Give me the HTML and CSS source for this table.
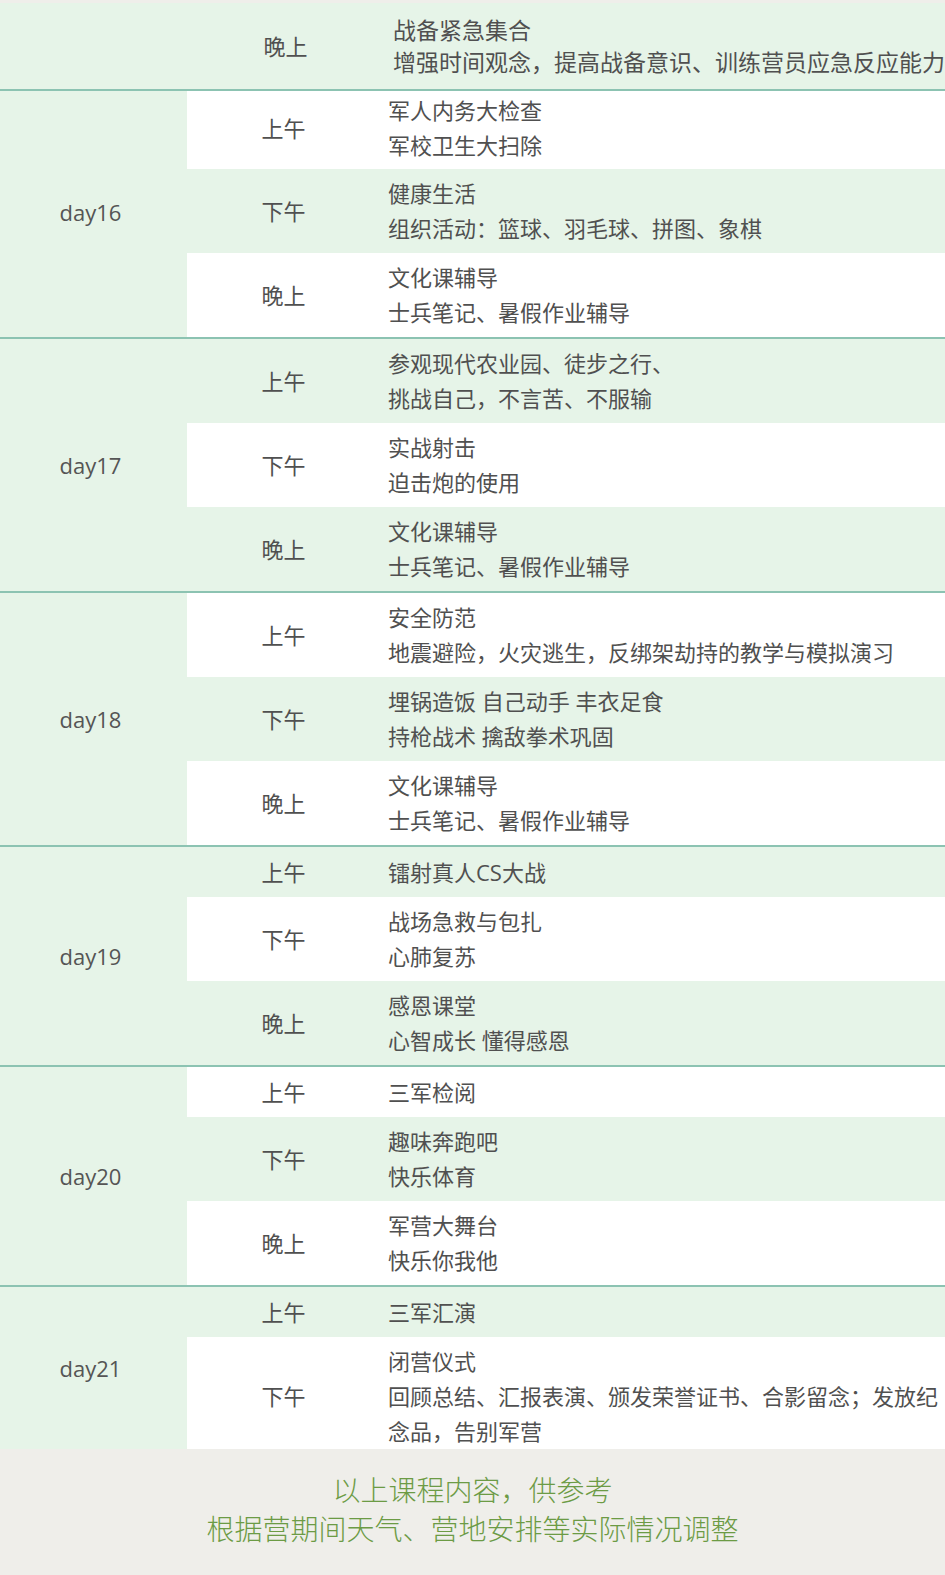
FILE: index.html
```html
<!DOCTYPE html>
<html lang="zh-CN">
<head>
<meta charset="utf-8">
<title>课程安排</title>
<link rel="stylesheet" href="styles.css">
</head>
<body>
<div class="page">
<table class="schedule">
  <colgroup><col class="c-day"><col class="c-time"><col class="c-text"></colgroup>
  <tbody class="first">
    <tr class="g top">
      <td class="day"></td>
      <td class="time">晚上</td>
      <td class="text">战备紧急集合<br>增强时间观念，提高战备意识、训练营员应急反应能力</td>
    </tr>
  </tbody>
  <tbody>
    <tr class="w short">
      <td class="day" rowspan="3">day16</td>
      <td class="time">上午</td>
      <td class="text">军人内务大检查<br>军校卫生大扫除</td>
    </tr>
    <tr class="g"><td class="time">下午</td><td class="text">健康生活<br>组织活动：篮球、羽毛球、拼图、象棋</td></tr>
    <tr class="w"><td class="time">晚上</td><td class="text">文化课辅导<br>士兵笔记、暑假作业辅导</td></tr>
  </tbody>
  <tbody>
    <tr class="g">
      <td class="day" rowspan="3">day17</td>
      <td class="time">上午</td>
      <td class="text">参观现代农业园、徒步之行、<br>挑战自己，不言苦、不服输</td>
    </tr>
    <tr class="w"><td class="time">下午</td><td class="text">实战射击<br>迫击炮的使用</td></tr>
    <tr class="g"><td class="time">晚上</td><td class="text">文化课辅导<br>士兵笔记、暑假作业辅导</td></tr>
  </tbody>
  <tbody>
    <tr class="w">
      <td class="day" rowspan="3">day18</td>
      <td class="time">上午</td>
      <td class="text">安全防范<br>地震避险，火灾逃生，反绑架劫持的教学与模拟演习</td>
    </tr>
    <tr class="g"><td class="time">下午</td><td class="text">埋锅造饭 自己动手 丰衣足食<br>持枪战术 擒敌拳术巩固</td></tr>
    <tr class="w"><td class="time">晚上</td><td class="text">文化课辅导<br>士兵笔记、暑假作业辅导</td></tr>
  </tbody>
  <tbody>
    <tr class="g one">
      <td class="day" rowspan="3">day19</td>
      <td class="time">上午</td>
      <td class="text">镭射真人CS大战</td>
    </tr>
    <tr class="w"><td class="time">下午</td><td class="text">战场急救与包扎<br>心肺复苏</td></tr>
    <tr class="g"><td class="time">晚上</td><td class="text">感恩课堂<br>心智成长 懂得感恩</td></tr>
  </tbody>
  <tbody>
    <tr class="w one">
      <td class="day" rowspan="3">day20</td>
      <td class="time">上午</td>
      <td class="text">三军检阅</td>
    </tr>
    <tr class="g"><td class="time">下午</td><td class="text">趣味奔跑吧<br>快乐体育</td></tr>
    <tr class="w"><td class="time">晚上</td><td class="text">军营大舞台<br>快乐你我他</td></tr>
  </tbody>
  <tbody>
    <tr class="g one">
      <td class="day" rowspan="2">day21</td>
      <td class="time">上午</td>
      <td class="text">三军汇演</td>
    </tr>
    <tr class="w last"><td class="time">下午</td><td class="text">闭营仪式<br>回顾总结、汇报表演、颁发荣誉证书、合影留念；发放纪念品，告别军营</td></tr>
  </tbody>
</table>
<div class="note">
  <p>以上课程内容，供参考</p>
  <p>根据营期间天气、营地安排等实际情况调整</p>
</div>
</div>
</body>
</html>
```

FILE: styles.css
```css
html, body {
  margin: 0;
  padding: 0;
}
body {
  background: #efeeea;
  overflow-x: hidden;
  width: 945px;
}
.page {
  padding-top: 3px;
  width: 945px;
  overflow: hidden;
}
.schedule {
  border-collapse: collapse;
  table-layout: fixed;
  width: 960px;
  font-family: "Open Sans", "Noto Sans CJK SC", sans-serif;
  font-size: 22px;
  color: #505050;
}
.c-day { width: 187px; }
.c-time { width: 193px; }
.c-text { width: 580px; }
.schedule tbody {
  border-top: 2px solid #8cc3b2;
}
.schedule tbody.first {
  border-top: 0;
}
.schedule td {
  padding: 7px 0 7px;
  line-height: 35px;
  vertical-align: middle;
}
.schedule tr.one td {
  padding-top: 8px;
}
.schedule tr.g td { background: #e6f4e8; }
.schedule tr.w td { background: #ffffff; }
.schedule td.day {
  background: #e6f4e8 !important;
  text-align: center;
  color: #555555;
  padding-left: 0;
  padding-right: 6px;
}
.schedule td.time {
  text-align: center;
  padding-left: 0;
  padding-right: 0;
}
.schedule td.text {
  padding-left: 8px;
  padding-right: 12px;
  text-align: left;
}
.schedule tr.top td {
  height: 87px;
  box-sizing: border-box;
  padding-top: 0;
  padding-bottom: 0;
  line-height: 32.5px;
}
.schedule tr.top td.time { padding-left: 4px; }
.schedule tr.top td.text {
  padding-left: 13px;
  font-size: 23px;
}
.schedule tr.short td {
  padding-top: 2px;
  padding-bottom: 6px;
}
.schedule tr.last td {
  padding-bottom: 0;
}
.note {
  padding: 21px 0 27px;
  text-align: center;
  font-family: "Noto Sans CJK SC", sans-serif;
  font-weight: 300;
  font-size: 28px;
  line-height: 38.5px;
  color: #6c9b45;
}
.note p {
  margin: 0;
}
```
